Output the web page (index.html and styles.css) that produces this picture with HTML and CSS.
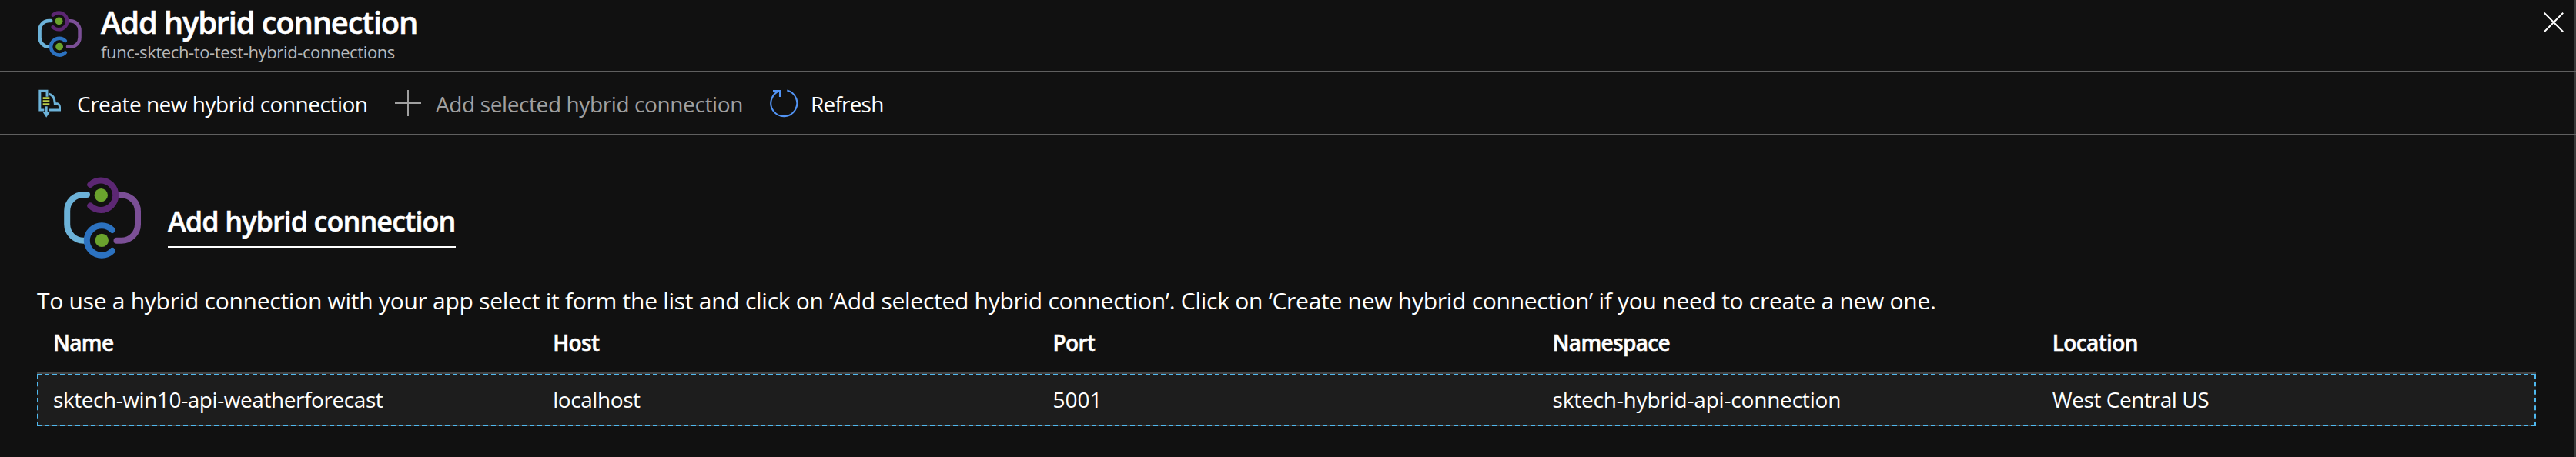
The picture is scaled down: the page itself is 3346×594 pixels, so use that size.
FILE: index.html
```
<!DOCTYPE html>
<html lang="en">
<head>
<meta charset="utf-8">
<title>Add hybrid connection</title>
<link rel="stylesheet" href="styles.css">
</head>
<body>
<svg class="defs" width="0" height="0" aria-hidden="true">
  <symbol id="hybrid" viewBox="0 0 100 106">
    <g fill="none" stroke-width="8" stroke-linecap="round">
      <path stroke="#6cb2d8" d="M30 22.9H25.5A21.3 21.3 0 0 0 4.2 44.2V61.4A21.3 21.3 0 0 0 25.5 82.7H29"/>
      <path stroke="#7b4f96" d="M70 23.4H74.7A21.3 21.3 0 0 1 96 44.7V61.4A21.3 21.3 0 0 1 74.7 82.7H68.5"/>
      <path stroke="#5c2773" d="M34.3 10A19.3 19.3 0 1 1 34.3 37.4"/>
      <path stroke="#2c72c0" d="M62.9 69A19.3 19.3 0 1 0 62.9 96"/>
    </g>
    <circle fill="#6aa32d" cx="48.3" cy="23.6" r="8.7"/>
    <circle fill="#6aa32d" cx="49.3" cy="82.4" r="8.7"/>
  </symbol>
</svg>

<div class="blade">
  <header class="header">
    <svg class="header-icon"><use href="#hybrid"/></svg>
    <div class="header-text">
      <h1 class="title">Add hybrid connection</h1>
      <div class="subtitle">func-sktech-to-test-hybrid-connections</div>
    </div>
    <svg class="close" viewBox="0 0 26 26"><path d="M.8 .8L25.2 25.2M25.2 .8L.8 25.2" fill="none" stroke="#fff" stroke-width="2"/></svg>
  </header>

  <nav class="toolbar">
    <div class="command command-create">
      <svg class="icon-create" viewBox="32 16 90 111">
        <g fill="none" stroke="#6cb2d8" stroke-width="9">
          <path d="M65 45V22.500H37.500V97H54"/>
          <path d="M71 34C88 37 95 50 96 72C108 71 114.500 76 114.500 85V97H73"/>
          <path d="M62.500 83V108"/>
        </g>
        <path fill="#6cb2d8" d="M49 105H76L62.500 126Z"/>
        <path fill="#b9cc4a" d="M49 47H75V55H49ZM49 59H75V67H49ZM49 71H75V79H49Z"/>
      </svg>
      <span class="label-create">Create new hybrid connection</span>
    </div>
    <div class="command command-add">
      <svg class="icon-add" viewBox="0 0 34 34"><path d="M17 0V34M0 17H34" fill="none" stroke="#a0a0a0" stroke-width="2"/></svg>
      <span class="label-add">Add selected hybrid connection</span>
    </div>
    <div class="command command-refresh">
      <svg class="icon-refresh" viewBox="0 0 36 37"><path d="M22.300 1.600A17 17 0 1 1 12.300 2.200M4 2H13V10" fill="none" stroke="#5294f5" stroke-width="2.100"/></svg>
      <span class="label-refresh">Refresh</span>
    </div>
  </nav>

  <main class="content">
    <div class="intro">
      <svg class="intro-icon"><use href="#hybrid"/></svg>
      <h2 class="intro-title">Add hybrid connection</h2>
    </div>
    <p class="description">To use a hybrid connection with your app select it form the list and click on ‘Add selected hybrid connection’. Click on ‘Create new hybrid connection’ if you need to create a new one.</p>
    <div class="grid">
      <div class="row row-head">
        <span>Name</span><span>Host</span><span>Port</span><span>Namespace</span><span>Location</span>
      </div>
      <div class="row row-selected">
        <span>sktech-win10-api-weatherforecast</span><span>localhost</span><span class="digits">5001</span><span class="namespace">sktech-hybrid-api-connection</span><span>West Central US</span>
      </div>
    </div>
  </main>
</div>
</body>
</html>
```
FILE: styles.css
```
* { box-sizing: border-box; }
body {
  margin: 0;
  background: #111;
  color: #fff;
  font: 28px/40px "Open Sans", "Noto Sans", sans-serif;
  white-space: nowrap;
  overflow: hidden;
}
h1, h2, p { margin: 0; }
svg { display: block; flex: none; }
.defs { position: absolute; }
.blade {
  height: 594px;
  background: linear-gradient(#3a3a3a, #3a3a3a) right / 2px 100% no-repeat;
}
.header {
  display: flex;
  align-items: flex-start;
  height: 94px;
  padding: 4px 16px 0 49px;
  border-bottom: 2px solid #606060;
}
.header-icon { width: 57px; height: 60px; margin: 10px 25px 0 0; }
.header-text { flex: 1; }
.title, .intro-title, .row-head { -webkit-text-stroke: .5px #fff; }
.title { font-size: 40px; line-height: 49px; font-weight: 600; letter-spacing: -1.22px; }
.subtitle { font-size: 22px; line-height: 29px; letter-spacing: -.38px; color: #b8b8b8; }
.close { width: 26px; height: 26px; margin-top: 12px; }

.toolbar {
  display: grid;
  grid-template-columns: 463px 487px auto;
  height: 82px;
  padding-left: 50px;
  border-bottom: 2px solid #606060;
}
.command { display: flex; align-items: center; }
.command span { padding-top: 2px; }
.icon-create { width: 30px; height: 37px; margin-right: 20px; }
.icon-add { width: 34px; height: 34px; margin-right: 19px; }
.icon-refresh { width: 36px; height: 37px; margin-right: 17px; }
.label-create { letter-spacing: -.49px; }
.label-add { letter-spacing: -.39px; color: #a0a0a0; }
.label-refresh { letter-spacing: -.8px; }

.content { padding: 54px 52px 0 48px; }
.intro { display: flex; align-items: flex-start; height: 141px; padding-left: 35px; }
.intro-icon { width: 100px; height: 106px; margin-right: 35px; }
.intro-title {
  width: 374px;
  margin-top: 34px;
  padding-bottom: 8px;
  border-bottom: 2px solid #fff;
  font-size: 36px;
  line-height: 48px;
  font-weight: 600;
  letter-spacing: -.94px;
}
.description { font-size: 30px; letter-spacing: -.27px; }
.row { display: grid; grid-template-columns: repeat(5, 1fr); letter-spacing: -.43px; }
.row span { padding-left: 21px; }
.row-head {
  height: 75px;
  padding-top: 14px;
  border-bottom: 2px solid #444;
  font-weight: 600;
  letter-spacing: -.65px;
}
.row-selected {
  height: 68px;
  padding-top: 13px;
  background: #1d1d1d;
  border-bottom: 2px solid #444;
  outline: 2px dashed #4fb8ee;
  outline-offset: -2px;
}
.row .digits { letter-spacing: 0; }
.row .namespace { letter-spacing: -.19px; }
```
